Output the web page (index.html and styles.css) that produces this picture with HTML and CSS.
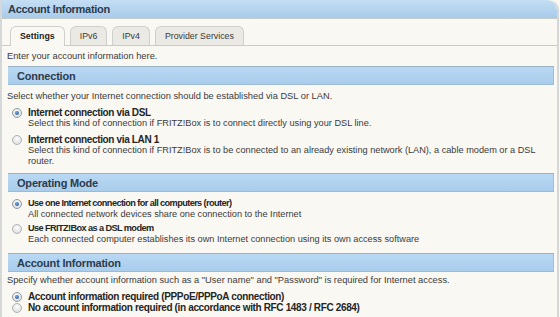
FILE: index.html
```html
<!DOCTYPE html>
<html lang="en">
<head>
  <meta charset="UTF-8" />
  <title>Account Information</title>
  <link rel="stylesheet" href="styles.css">
</head>
<body>
  <div class="panel">
    <div class="title-bar">Account Information</div>
    <ul class="tabs">
      <li class="tab active">Settings</li>
      <li class="tab">IPv6</li>
      <li class="tab">IPv4</li>
      <li class="tab">Provider Services</li>
    </ul>
    <div class="content">
      <p class="intro">Enter your account information here.</p>

      <h2 class="section">Connection</h2>
      <p class="hint">Select whether your Internet connection should be established via DSL or LAN.</p>
      <div class="option">
        <span class="radio checked"></span>
        <div>
          <div class="label">Internet connection via DSL</div>
          <div class="desc">Select this kind of connection if FRITZ!Box is to connect directly using your DSL line.</div>
        </div>
      </div>
      <div class="option">
        <span class="radio"></span>
        <div>
          <div class="label">Internet connection via LAN 1</div>
          <div class="desc">Select this kind of connection if FRITZ!Box is to be connected to an already existing network (LAN), a cable modem or a DSL router.</div>
        </div>
      </div>

      <h2 class="section mode">Operating Mode</h2>
      <div class="option first">
        <span class="radio checked"></span>
        <div>
          <div class="label small">Use one Internet connection for all computers (router)</div>
          <div class="desc">All connected network devices share one connection to the Internet</div>
        </div>
      </div>
      <div class="option">
        <span class="radio"></span>
        <div>
          <div class="label small">Use FRITZ!Box as a DSL modem</div>
          <div class="desc">Each connected computer establishes its own Internet connection using its own access software</div>
        </div>
      </div>

      <h2 class="section account">Account Information</h2>
      <p class="hint tight">Specify whether account information such as a "User name" and "Password" is required for Internet access.</p>
      <div class="option">
        <span class="radio checked"></span>
        <div class="label">Account information required (PPPoE/PPPoA connection)</div>
      </div>
      <div class="option compact">
        <span class="radio"></span>
        <div class="label">No account information required (in accordance with RFC 1483 / RFC 2684)</div>
      </div>
    </div>
  </div>
</body>
</html>
```
FILE: styles.css
```css
body {
  margin: 0;
  background: #faf8f3;
  font-family: "Liberation Sans", Arial, sans-serif;
  font-size: 9.3px;
  color: #3a3a3a;
}
.panel {
  border-left: 2px solid #d5d8d6;
  border-right: 2px solid #d5d8d6;
  margin-right: 1px;
  border-top-right-radius: 10px;
  height: 317px;
  overflow: hidden;
  background: #faf8f3;
}
.title-bar {
  height: 18px;
  line-height: 19px;
  padding-left: 6px;
  font-size: 11px;
  font-weight: bold;
  letter-spacing: -0.3px;
  color: #2c3b4c;
  background: linear-gradient(#c4def4, #a8cbea);
  border-bottom: 1px solid #c6cbc7;
  border-top-right-radius: 10px;
}
.tabs {
  display: flex;
  gap: 5px;
  list-style: none;
  margin: 7px 0 0 0;
  padding: 0 0 0 8px;
  border-bottom: 1px solid #c9ccc6;
}
.tab {
  height: 18px;
  line-height: 19px;
  padding: 0 9px;
  font-size: 8.8px;
  background: #ebe9e4;
  border: 1px solid #cfd0cb;
  border-bottom: none;
  border-radius: 6px 6px 0 0;
  color: #3a3a3a;
}
.tab.active {
  background: #faf8f3;
  font-weight: bold;
  color: #222;
  margin-bottom: -1px;
  height: 19px;
}
.content {
  padding: 0 3px 0 6px;
}
.intro {
  margin: 4px 0 0 -1px;
  line-height: 12px;
}
.section {
  margin: 4px 0 0 0;
  height: 17px;
  line-height: 18px;
  padding-left: 9px;
  font-size: 11px;
  font-weight: bold;
  letter-spacing: -0.2px;
  color: #2c3b4c;
  background: linear-gradient(#b9d8f3, #a9cdec);
  border-top: 1px solid #9cb2c6;
  border-bottom: 1px solid #9dbad3;
  border-right: 1px solid #a3bdd2;
}
.section.mode {
  margin-top: 6px;
}
.section.account {
  margin-top: 8px;
}
.hint {
  margin: 5px 0 0 -1px;
  line-height: 12px;
}
.hint.tight {
  margin-top: 2px;
}
.option {
  display: flex;
  align-items: flex-start;
  gap: 6px;
  margin: 5px 0 0 4px;
  line-height: 11px;
}
.option.first {
  margin-top: 6px;
}
.option.first + .option {
  margin-top: 3px;
}
.option.compact {
  margin-top: 0;
}
.label {
  font-size: 10px;
  font-weight: bold;
  letter-spacing: -0.35px;
  color: #252525;
}
.label.small {
  font-size: 9.2px;
  letter-spacing: -0.6px;
}
.desc {
  font-size: 9.2px;
  color: #3a3a3a;
}
.radio {
  flex: none;
  width: 8px;
  height: 8px;
  margin-top: 1px;
  border-radius: 50%;
  border: 1px solid #aeb2b4;
  background: radial-gradient(circle at 50% 35%, #fdfdfd, #d8d8d8);
  position: relative;
}
.radio.checked {
  border-color: #8e9aa6;
}
.radio.checked::after {
  content: "";
  position: absolute;
  left: 2px;
  top: 2px;
  width: 4px;
  height: 4px;
  border-radius: 50%;
  background: radial-gradient(circle at 40% 35%, #6fa4e0, #1f4b8a);
}
```
